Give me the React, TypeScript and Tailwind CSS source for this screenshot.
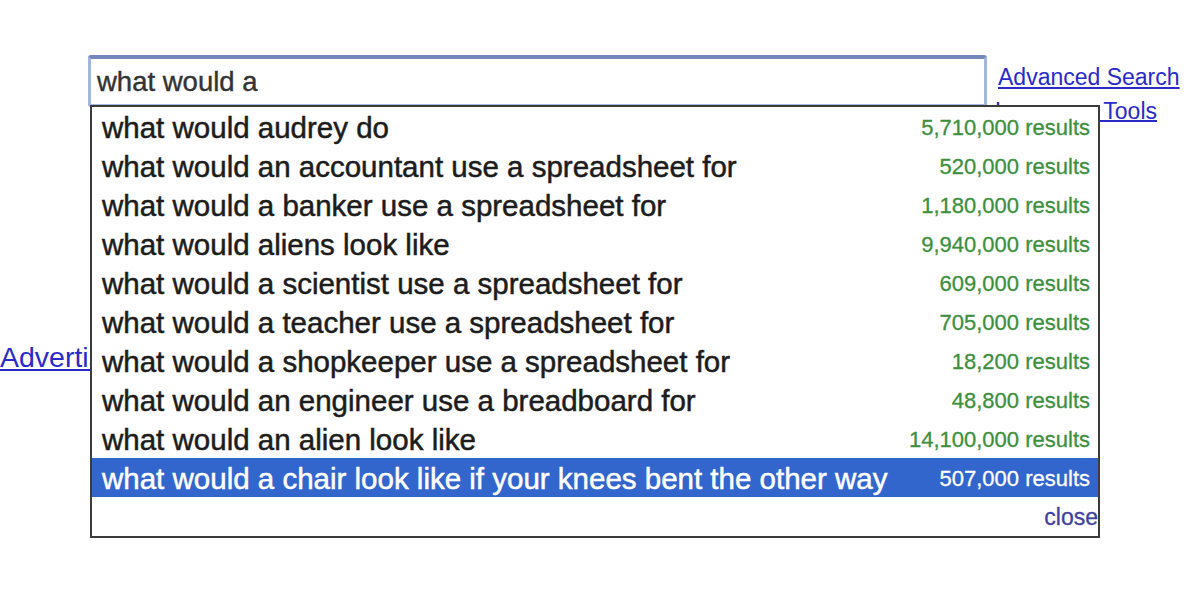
const suggestions = [
  { text: "what would audrey do", count: "5,710,000" },
  { text: "what would an accountant use a spreadsheet for", count: "520,000" },
  { text: "what would a banker use a spreadsheet for", count: "1,180,000" },
  { text: "what would aliens look like", count: "9,940,000" },
  { text: "what would a scientist use a spreadsheet for", count: "609,000" },
  { text: "what would a teacher use a spreadsheet for", count: "705,000" },
  { text: "what would a shopkeeper use a spreadsheet for", count: "18,200" },
  { text: "what would an engineer use a breadboard for", count: "48,800" },
  { text: "what would an alien look like", count: "14,100,000" },
  { text: "what would a chair look like if your knees bent the other way", count: "507,000" },
];

const selected = 9;

export default function App() {
  return (
    <div className="relative h-[590px] w-[1200px] overflow-hidden bg-white pt-[55px] font-['Liberation_Sans',Arial,sans-serif]">
      {/* search row */}
      <div className="flex items-start pl-[88px]">
        <div className="flex h-[52px] w-[899px] items-start rounded-[3px] border-x-[3px] border-t-4 border-b-[3px] border-x-[#a3b6dc] border-t-[#7488bb] border-b-[#a3b6dc] bg-white px-[6px] pt-[7px] text-[27.5px] leading-[32px] text-[#333] [-webkit-text-stroke:0.4px_currentColor]">
          what would a
        </div>
        <div className="ml-[11px] flex flex-col items-start pt-[6px] text-[23px] leading-[32px] text-[#2a2ac8]">
          <a className="underline underline-offset-2">Advanced Search</a>
          <a className="ml-[-3px] mt-[2px] underline underline-offset-1">Language Tools</a>
        </div>
      </div>

      <div className="mt-[212px] w-[90px] overflow-hidden whitespace-nowrap text-[28.5px] leading-[36px] text-[#2a2ac8]">
        <a className="underline underline-offset-2">Advertising Programs</a>
      </div>

      {/* suggestion dropdown */}
      <div className="absolute left-[90px] top-[105px] w-[1010px] border-2 border-[#3c3c3c] bg-white">
        {suggestions.map((s, i) => (
          <div
            key={s.text}
            className={
              i === selected
                ? "flex h-[39px] items-center justify-between whitespace-nowrap bg-[#3366cc] pl-[10px] pr-[8px] pt-[2px] text-white"
                : "flex h-[39px] items-center justify-between whitespace-nowrap pl-[10px] pr-[8px] pt-[2px] text-[#1c1c1c]"
            }
          >
            <span className="text-[29.5px] leading-[34px] [-webkit-text-stroke:0.5px_currentColor]">{s.text}</span>
            <span
              className={
                i === selected
                  ? "text-[22px] leading-[30px] text-white [-webkit-text-stroke:0.3px_currentColor]"
                  : "text-[22px] leading-[30px] text-[#3d8f3d] [-webkit-text-stroke:0.3px_currentColor]"
              }
            >
              {s.count} results
            </span>
          </div>
        ))}
        <div className="flex h-[39px] items-center justify-end overflow-hidden pt-[2px] text-[23px] text-[#4040a0] [-webkit-text-stroke:0.3px_currentColor]">
          close
        </div>
      </div>
    </div>
  );
}
